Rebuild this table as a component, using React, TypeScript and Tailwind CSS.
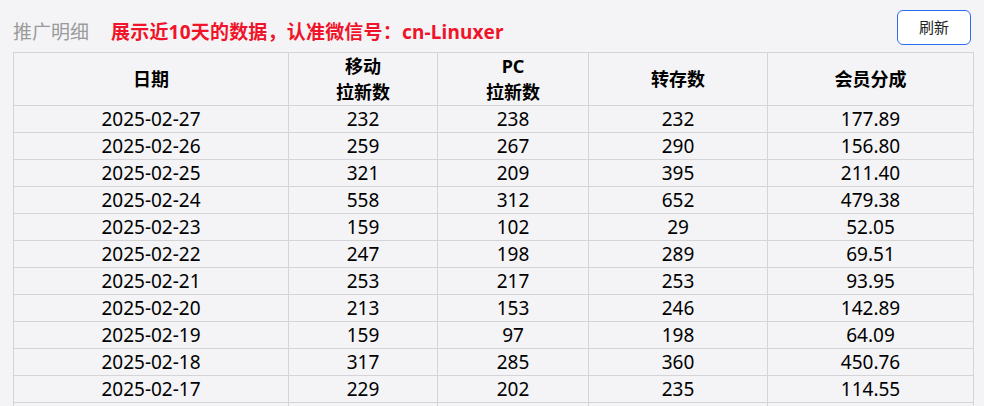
import React from "react";

const rows = [
  ["2025-02-27", "232", "238", "232", "177.89"],
  ["2025-02-26", "259", "267", "290", "156.80"],
  ["2025-02-25", "321", "209", "395", "211.40"],
  ["2025-02-24", "558", "312", "652", "479.38"],
  ["2025-02-23", "159", "102", "29", "52.05"],
  ["2025-02-22", "247", "198", "289", "69.51"],
  ["2025-02-21", "253", "217", "253", "93.95"],
  ["2025-02-20", "213", "153", "246", "142.89"],
  ["2025-02-19", "159", "97", "198", "64.09"],
  ["2025-02-18", "317", "285", "360", "450.76"],
  ["2025-02-17", "229", "202", "235", "114.55"],
  ["", "", "", "", ""],
];

const App = () => {
  return (
    <div
      className="h-[406px] w-[984px] overflow-hidden bg-[#f4f4f6] text-black"
      style={{ fontFamily: '"Noto Sans", "Noto Sans CJK SC", sans-serif' }}
    >
      <div className="flex h-[52px] justify-between pl-[13px] pr-[13px]">
        <div className="flex h-full items-center pt-[12px]">
          <span className="text-[19px] text-[#9a9a9a]">推广明细</span>
          <span className="ml-[22px] text-[19px] font-bold tracking-[0.2px] text-[#f0142a]">
            展示近10天的数据，认准微信号：cn-Linuxer
          </span>
        </div>
        <button className="mt-[10px] h-[35px] w-[74px] rounded-[6px] border border-[#2a6df4] bg-white text-[15px] text-[#222]">
          刷新
        </button>
      </div>

      <table className="ml-[13px] w-[960px] table-fixed border-collapse">
        <colgroup>
          <col className="w-[275px]" />
          <col className="w-[149px]" />
          <col className="w-[151px]" />
          <col className="w-[179px]" />
          <col className="w-[206px]" />
        </colgroup>
        <thead>
          <tr className="text-[18px] font-bold leading-[26px]">
            <th className="border border-[#d4d4d6] p-0">日期</th>
            <th className="border border-[#d4d4d6] p-0">
              移动
              <br />
              拉新数
            </th>
            <th className="border border-[#d4d4d6] p-0">
              PC
              <br />
              拉新数
            </th>
            <th className="border border-[#d4d4d6] p-0">转存数</th>
            <th className="border border-[#d4d4d6] p-0">会员分成</th>
          </tr>
        </thead>
        <tbody>
          {rows.map((r, idx) => (
            <tr key={idx} className="h-[27px] text-[19px] leading-[26px]">
              {r.map((c, i) => (
                <td key={i} className="border border-[#d4d4d6] p-0 text-center">
                  {c}
                </td>
              ))}
            </tr>
          ))}
        </tbody>
      </table>
    </div>
  );
};

export default App;
